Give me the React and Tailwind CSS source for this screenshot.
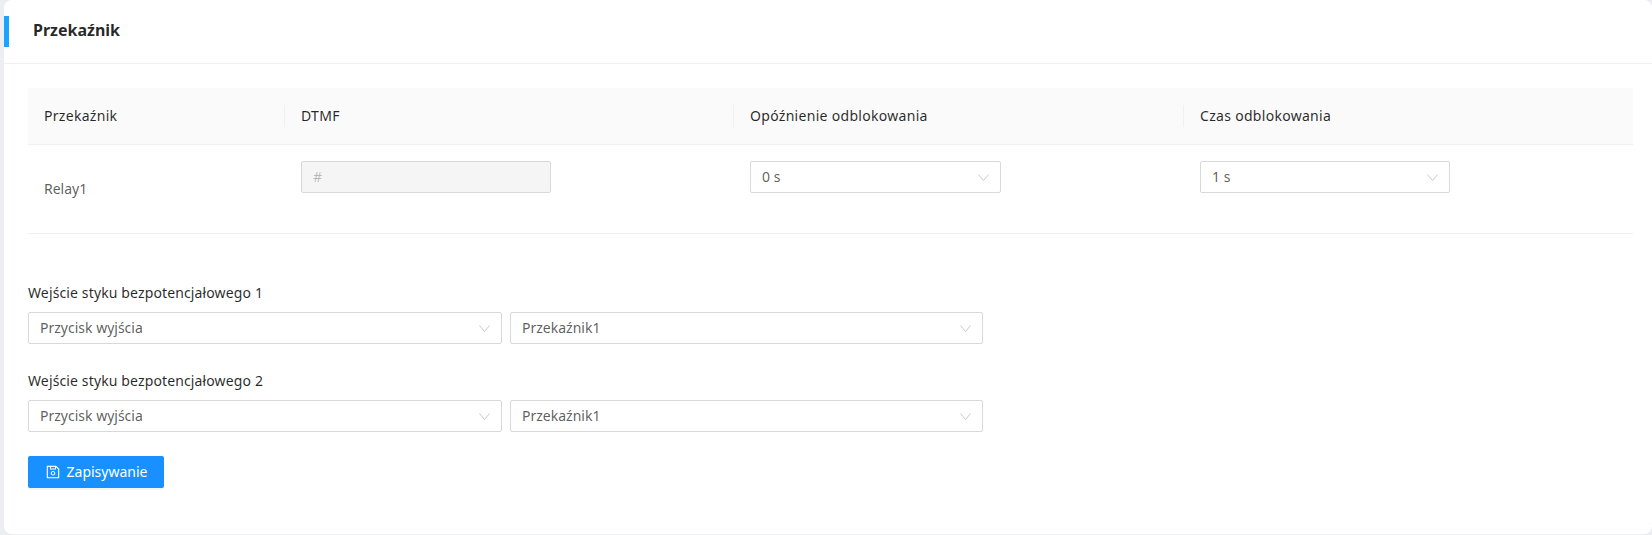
import { AiOutlineSave } from "react-icons/ai";

function Arrow() {
  return (
    <svg width="11" height="7" viewBox="0 0 11 7" fill="none" className="shrink-0">
      <polyline points="0.5,0.5 5.5,6.5 10.5,0.5" stroke="#c9c9c9" strokeWidth="1" />
    </svg>
  );
}

function Select({ value, className }) {
  return (
    <div
      className={`flex h-8 items-center justify-between rounded-[2px] border border-[#d9d9d9] bg-white px-[11px] text-[rgba(0,0,0,0.65)] ${className}`}
    >
      <span>{value}</span>
      <Arrow />
    </div>
  );
}

function ContactInput({ label }) {
  return (
    <div>
      <div className="mb-[8px] h-[22px] leading-[22px] tracking-[0.13px] text-[rgba(0,0,0,0.85)]">{label}</div>
      <div className="flex gap-2">
        <Select value="Przycisk wyjścia" className="w-[474px]" />
        <Select value="Przekaźnik1" className="w-[473px]" />
      </div>
    </div>
  );
}

export default function App() {
  const columns = ["DTMF", "Opóźnienie odblokowania", "Czas odblokowania"];

  return (
    <div className="h-[535px] overflow-hidden bg-[#eceef2] pl-1 pb-[1px] font-['Noto_Sans',sans-serif] text-sm">
      <div className="h-full rounded-lg bg-white">
        <div className="flex h-[64px] items-start border-b border-[#f0f0f0]">
          <div className="mt-4 h-[31px] w-[5px] bg-[#1aa3ff]" />
          <h1 className="ml-6 mt-[18px] text-base leading-[24px] font-bold text-[rgba(0,0,0,0.85)]">Przekaźnik</h1>
        </div>

        <div className="pl-6 pr-[19px] pt-6">
          <div className="grid grid-cols-[257px_449px_450px_449px] border-b border-[#f0f0f0]">
            <div className="flex h-[57px] items-center border-b border-[#f0f0f0] bg-[#fafafa] pl-4 tracking-[0.3px] text-[rgba(0,0,0,0.85)]">
              Przekaźnik
            </div>
            {columns.map((name) => (
              <div
                key={name}
                className="flex h-[57px] items-center border-b border-[#f0f0f0] bg-[#fafafa] tracking-[0.3px] text-[rgba(0,0,0,0.85)]"
              >
                <span className="-ml-px mr-4 h-[22px] w-px bg-[#f0f0f0]" />
                {name}
              </div>
            ))}

            <div className="flex h-[88px] items-center pl-4 text-[rgba(0,0,0,0.65)]">Relay1</div>
            <div className="pl-4 pt-4">
              <div className="flex h-8 w-[250px] items-center rounded-[2px] border border-[#d9d9d9] bg-[#f5f5f5] px-[11px] text-[rgba(0,0,0,0.25)]">
                #
              </div>
            </div>
            <div className="pl-4 pt-4">
              <Select value="0 s" className="w-[251px]" />
            </div>
            <div className="pl-4 pt-4">
              <Select value="1 s" className="w-[250px]" />
            </div>
          </div>

          <div className="mt-[48px] flex flex-col gap-[26px]">
            <ContactInput label="Wejście styku bezpotencjałowego 1" />
            <ContactInput label="Wejście styku bezpotencjałowego 2" />
          </div>

          <button className="mt-6 flex h-8 w-[136px] items-center justify-center gap-[6px] rounded-[2px] bg-[#1890ff] text-white shadow-[0_2px_0_rgba(0,0,0,0.045)]">
            <AiOutlineSave className="text-base" />
            Zapisywanie
          </button>
        </div>
      </div>
    </div>
  );
}
